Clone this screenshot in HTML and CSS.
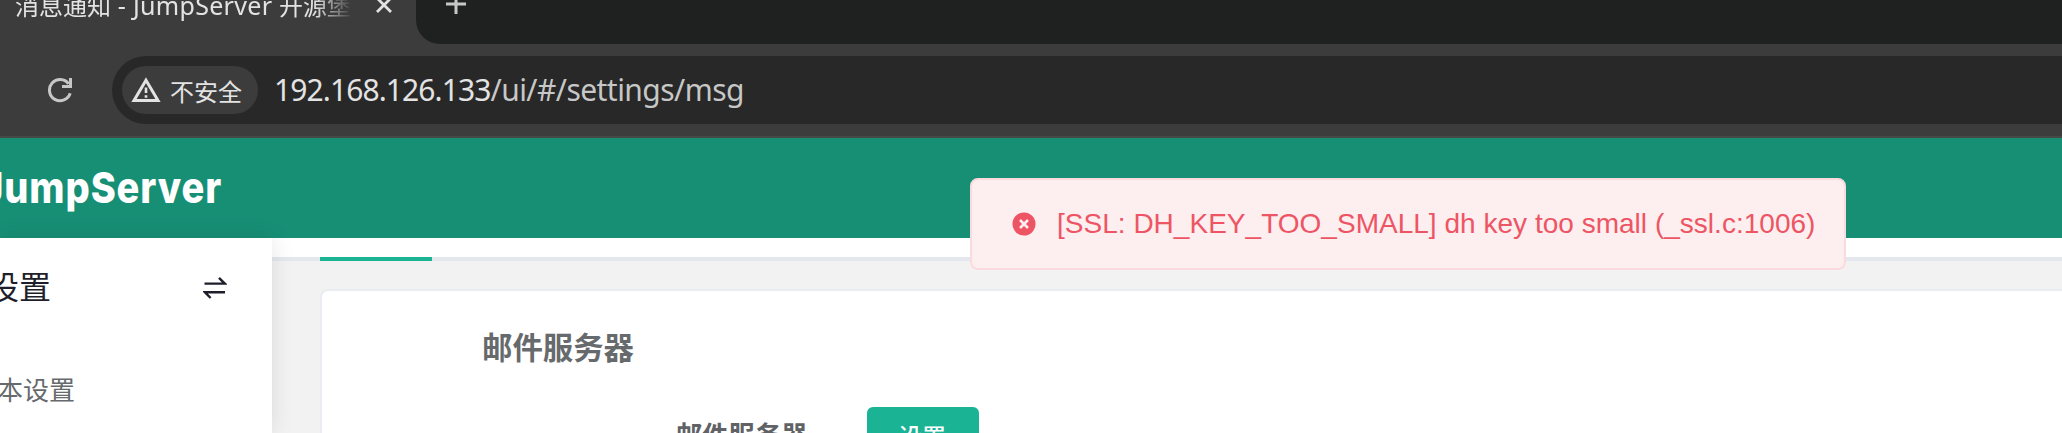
FILE: index.html
```html
<!DOCTYPE html>
<html lang="zh-CN">
<head>
<meta charset="utf-8">
<title>消息通知 - JumpServer</title>
<link rel="stylesheet" href="styles.css">
</head>
<body>
<div class="tabstrip">
  <div class="tab">
    <div class="tab-title">消息通知<span class="tab-name"> - JumpServer </span>开源堡</div>
    <svg class="tab-close" width="18" height="18" viewBox="0 0 18 18"><path d="M2 2 16 16M16 2 2 16"/></svg>
  </div>
  <div class="strip-rest"><svg width="20" height="20" viewBox="0 0 20 20"><path d="M10 0V20M0 10H20"/></svg></div>
</div>
<div class="toolbar">
  <svg class="reload" width="26" height="26" viewBox="0 0 26 26"><path d="M23.2 16.3A10.6 10.6 0 1 1 21.6 6.8"/><path class="solid" d="M25 1V11H15V8H22V1Z"/></svg>
  <div class="address">
    <div class="chip">
      <svg width="30" height="26" viewBox="0 0 30 26"><path class="tri" d="M15 3.2 27 23.5H3Z"/><path class="mark" d="M15 10.5V16M15 18.3V20.8"/></svg>
      <span>不安全</span>
    </div>
    <div class="url"><span class="host">192.168.126.133</span><span class="path">/ui/#/settings/msg</span></div>
  </div>
</div>
<header class="header">
  <svg class="logo" width="240" height="60" viewBox="0 0 240 60"><text x="-19" y="45" textLength="241" lengthAdjust="spacingAndGlyphs">JumpServer</text></svg>
</header>
<div class="layout">
  <aside class="sidebar">
    <div class="side-head">
      <span class="side-title">系统设置</span>
      <svg class="swap" width="24" height="24" viewBox="0 0 24 24"><path d="M1.5 8.6H21.8L16 2.8M22 17.2H1.8L7.6 23"/></svg>
    </div>
    <div class="side-item">基本设置</div>
  </aside>
  <main class="main">
    <div class="tabs"><div class="active-tab"></div></div>
    <section class="card">
      <h2>邮件服务器</h2>
      <div class="row"><span class="label">邮件服务器</span><button class="btn">设置</button></div>
    </section>
  </main>
</div>
<div class="alert">
  <svg width="24" height="24" viewBox="0 0 24 24"><circle cx="12" cy="12" r="11.5"/><path d="M8 8 16 16M16 8 8 16"/></svg>
  <span>[SSL: DH_KEY_TOO_SMALL] dh key too small (_ssl.c:1006)</span>
</div>
</body>
</html>
```
FILE: styles.css
```css
* { box-sizing: border-box; }
body {
  margin: 0;
  height: 433px;
  overflow: hidden;
  background: #f2f2f2;
  font-family: "Liberation Sans", "Noto Sans CJK SC", sans-serif;
}
svg { display: block; flex: none; fill: none; }
.tabstrip { display: flex; height: 44px; background: #3c3c3c; }
.tab { display: flex; width: 416px; padding-left: 15px; }
.tab-title {
  width: 341px;
  height: 40px;
  margin-top: -13px;
  overflow: hidden;
  white-space: pre;
  color: #e3e3e3;
  font: 24px/36px "Noto Sans CJK SC", sans-serif;
  mask-image: linear-gradient(to right, #000 300px, transparent 338px);
}
.tab-name { font-family: "Noto Sans", sans-serif; font-size: 25px; line-height: 30px; letter-spacing: 0.3px; }
.tab-close { margin: -4px 0 0 19px; stroke: #e3e3e3; stroke-width: 2.8; }
.strip-rest { flex: 1; background: #1f2120; border-bottom-left-radius: 24px; padding: 0 30px; }
.strip-rest svg { margin-top: -6px; stroke: #c7c7c7; stroke-width: 3; }
.toolbar {
  display: flex;
  height: 94px;
  padding: 12px 0 12px 47px;
  background: #3c3c3c;
  border-bottom: 2px solid #474747;
}
.reload { margin-top: 21px; stroke: #c7c7c7; stroke-width: 3; }
.reload .solid { fill: #c7c7c7; stroke: none; }
.address {
  display: flex;
  align-items: center;
  flex: 1;
  height: 68px;
  margin-left: 39px;
  padding-left: 10px;
  border-radius: 34px 0 0 34px;
  background: #282828;
}
.chip {
  display: flex;
  align-items: center;
  gap: 9px;
  width: 136px;
  height: 48px;
  padding-left: 9px;
  border-radius: 24px;
  background: #3c3c3c;
  color: #e3e3e3;
  font: 24px/36px "Noto Sans CJK SC", sans-serif;
  white-space: nowrap;
}
.chip span { padding-top: 1px; }
.tri { stroke: #e3e3e3; stroke-width: 3; }
.mark { stroke: #e3e3e3; stroke-width: 2.6; }
.url { margin-left: 16px; font: 30px/40px "Noto Sans", sans-serif; white-space: nowrap; }
.host { color: #e3e3e3; letter-spacing: -0.9px; }
.path { color: #c7c7c7; letter-spacing: -0.55px; }
.header { height: 100px; padding-top: 20px; background: #178f75; }
.logo text { font: 800 43px Inter, sans-serif; letter-spacing: 1px; fill: #fff; }
.layout { display: flex; height: 195px; }
.sidebar { width: 272px; background: #fff; box-shadow: 0 0 22px rgba(0, 0, 0, .1); z-index: 1; white-space: nowrap; }
.side-head { display: flex; justify-content: space-between; align-items: center; height: 100px; padding-right: 45px; }
.side-title { margin-left: -77px; color: #1f1f2b; font-size: 32px; line-height: 48px; }
.swap { margin-top: -2px; stroke: #1f1f2b; stroke-width: 2.4; }
.side-item { margin: 33px 0 0 -29px; color: #676a6c; font-size: 26px; line-height: 40px; }
.main { flex: 1; overflow: hidden; }
.tabs { display: flex; align-items: flex-end; height: 23px; padding-left: 48px; background: #fff; box-shadow: inset 0 -4px #e4e7ed; }
.active-tab { width: 112px; height: 4px; background: #1ab394; }
.card {
  height: 144px;
  margin: 28px 0 0 48px;
  padding: 35px 0 0 160px;
  background: #fff;
  border: solid #e9ecf1;
  border-width: 2px 0 0 2px;
  border-top-left-radius: 8px;
}
h2 { margin: 0; color: #676a6c; font: 700 30.4px/40px "Noto Sans CJK SC", sans-serif; }
.row { display: flex; margin-top: 41px; padding-left: 194px; color: #606266; }
.label { width: 191px; padding-top: 9px; font: 700 26.3px/36px "Noto Sans CJK SC", sans-serif; white-space: nowrap; }
.btn { width: 112px; height: 64px; padding: 0 2px 6px 0; border: 0; border-radius: 6px; background: #1ab394; color: #fff; font: 500 24px/50px "Noto Sans CJK SC", sans-serif; }
.alert {
  position: absolute;
  left: 969.5px;
  top: 178px;
  z-index: 2;
  display: flex;
  align-items: center;
  width: 876.5px;
  height: 92px;
  padding-left: 40px;
  border: 2px solid #fbdadd;
  border-radius: 8px;
  background: #fdeeef;
  color: #ed5565;
  font-size: 28px;
  letter-spacing: 0.02px;
  white-space: nowrap;
}
.alert span { margin-left: 21.5px; }
.alert circle { fill: #ed5565; }
.alert path { stroke: #fdeeef; stroke-width: 2.5; }
```
